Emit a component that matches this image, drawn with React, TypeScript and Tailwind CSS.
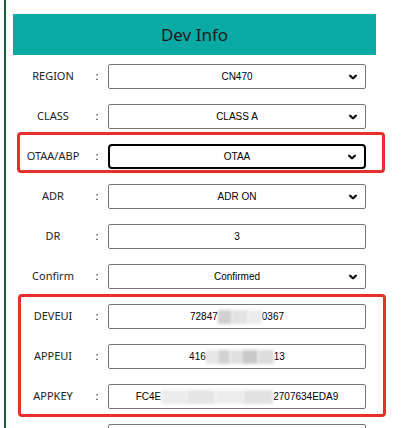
import React from "react";

const Chevron = () => (
  <svg width="8" height="5" viewBox="0 0 8 5" className="absolute right-[8px] top-1/2 -translate-y-1/2">
    <path d="M1 1 L4 4 L7 1" fill="none" stroke="#111" strokeWidth="2.2" strokeLinecap="round" strokeLinejoin="round" />
  </svg>
);

type Row = {
  label: string;
  value: React.ReactNode;
  select?: boolean;
  focused?: boolean;
};

const Blur = ({ w, tone = "bg-[#d8d8d8]" }: { w: number; tone?: string }) => (
  <span className={`inline-block h-[14px] align-middle blur-[1.5px] ${tone}`} style={{ width: w }} />
);

const rows: Row[] = [
  { label: "REGION", value: "CN470", select: true },
  { label: "CLASS", value: "CLASS A", select: true },
  { label: "OTAA/ABP", value: "OTAA", select: true, focused: true },
  { label: "ADR", value: "ADR ON", select: true },
  { label: "DR", value: "3" },
  { label: "Confirm", value: "Confirmed", select: true },
  {
    label: "DEVEUI",
    value: (
      <span className="flex items-center">
        <span>72847</span>
        <span className="inline-flex">
          <Blur w={14} tone="bg-[#cfcfcf]" />
          <Blur w={16} tone="bg-[#e2e2e2]" />
          <Blur w={14} tone="bg-[#ececec]" />
        </span>
        <span>0367</span>
      </span>
    ),
  },
  {
    label: "APPEUI",
    value: (
      <span className="flex items-center">
        <span>416</span>
        <span className="inline-flex">
          <Blur w={12} tone="bg-[#e6e6e6]" />
          <Blur w={12} tone="bg-[#d2d2d2]" />
          <Blur w={12} tone="bg-[#e0e0e0]" />
          <Blur w={16} tone="bg-[#c9c9c9]" />
          <Blur w={16} tone="bg-[#dcdcdc]" />
        </span>
        <span>13</span>
      </span>
    ),
  },
  {
    label: "APPKEY",
    value: (
      <span className="flex items-center">
        <span>FC4E</span>
        <span className="inline-flex">
          <Blur w={26} tone="bg-[#ececec]" />
          <Blur w={28} tone="bg-[#e4e4e4]" />
          <Blur w={28} tone="bg-[#ededed]" />
          <Blur w={30} tone="bg-[#e2e2e2]" />
        </span>
        <span>2707634EDA9</span>
      </span>
    ),
  },
  { label: "", value: "" },
];

export default function App() {
  return (
    <div className="relative w-[416px] h-[428px] overflow-hidden bg-white flex" style={{ fontFamily: '"Noto Sans", sans-serif' }}>
      <div className="w-[4px] shrink-0" />
      <div className="w-[2px] shrink-0 bg-[#1f5a36]" />
      <div className="flex-1 pl-[7px] pt-[14px]">
        <div className="w-[363px] h-[41px] bg-[#0aaaa4] flex items-center justify-center text-[17px] text-[#1a1a1a]">
          Dev Info
        </div>
        <div className="flex flex-col gap-[15px] mt-[9px]">
          {rows.map((r, i) => (
            <div key={i} className="flex items-center h-[25px]">
              <div className="w-[80px] text-center text-[11px] text-[#222]">{r.label}</div>
              <div className="w-[8px] text-center text-[11px] text-[#222]">{r.label ? ":" : ""}</div>
              <div className="w-[7px]" />
              <div
                className={`relative w-[258px] h-[25px] flex items-center justify-center text-[10px] text-black ${
                  r.focused ? "border-2 border-black rounded-[4px]" : "border border-[#767676] rounded-[2px]"
                }`}
                style={{ fontFamily: '"Liberation Sans", Arial, sans-serif' }}
              >
                {r.value}
                {r.select && <Chevron />}
              </div>
            </div>
          ))}
        </div>
      </div>
      <div className="absolute left-[17px] top-[132px] w-[368px] h-[41px] border-[3px] border-[#e8302b] rounded-[4px]" />
      <div className="absolute left-[18px] top-[294px] w-[368px] h-[123px] border-[3px] border-[#e8302b] rounded-[4px]" />
    </div>
  );
}
